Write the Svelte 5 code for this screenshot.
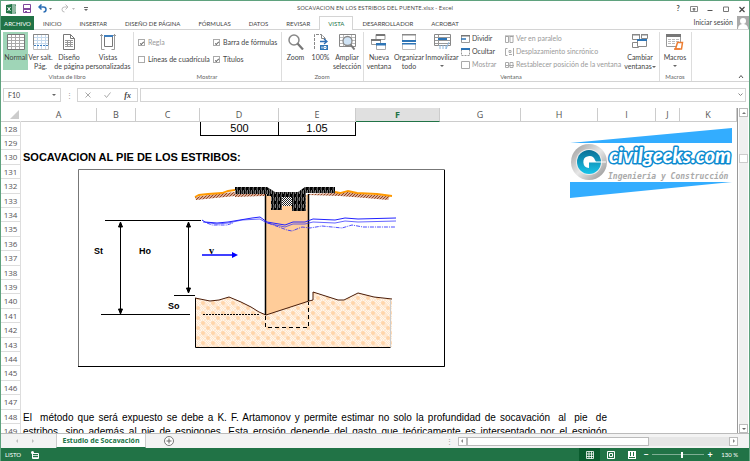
<script lang="ts">
  const tabs = [
    "INICIO",
    "INSERTAR",
    "DISEÑO DE PÁGINA",
    "FÓRMULAS",
    "DATOS",
    "REVISAR",
    "VISTA",
    "DESARROLLADOR",
    "ACROBAT",
  ];
  const columns = ["A", "B", "C", "D", "E", "F", "G", "H", "I", "J", "K"];
  const rows = Array.from({ length: 22 }, (_, i) => 128 + i);

  const paragraph: Record<number, string> = {
    148: "El  método que será expuesto se debe a K. F. Artamonov y permite estimar no solo la profundidad de socavación  al  pie  de",
    149: "estribos, sino además al pie de espigones. Esta erosión depende del gasto que teóricamente es interseptado por el espigón",
  };

  let activeTab = $state("VISTA");
  let regla = $state(true);
  let barra = $state(true);
  let lineas = $state(false);
  let titulos = $state(true);
  let zoom = $state(130);
</script>

<div class="window">
  <header class="title">
    <div class="quick">
      <svg width="10" height="10" viewBox="0 0 10 10">
        <path d="M5 1h5v8H5z" fill="#fff" stroke="#217346" />
        <path d="M6 3h3M6 5h3M6 7h3" stroke="#217346" />
        <path d="M0 1l6-1v10L0 9z" fill="#217346" />
        <path d="M1.500 3l3 4M4.500 3l-3 4" stroke="#fff" />
      </svg>
      <button aria-label="Guardar">
        <svg width="8" height="9" viewBox="0 0 8 9">
          <path d="M.5.5h7v8h-7z" fill="#fff" stroke="#80489c" />
          <path d="M1 5h6v1H1zM2 7h2v2H2z" fill="#80489c" />
          <path d="M1 4.500h6" stroke="#80489c" />
        </svg>
      </button>
      <button aria-label="Deshacer">
        <svg width="16" height="9" viewBox="0 0 16 9">
          <path d="M1 3h4.500a2.500 2.500 0 0 1 0 5M3.500.5L1 3l2.500 2.500" fill="none" stroke="#2e6fb5" stroke-width="1.500" />
          <path d="M11 4h3l-1.500 2z" fill="#777" />
        </svg>
      </button>
      <button aria-label="Rehacer">
        <svg width="16" height="9" viewBox="0 0 16 9">
          <path d="M7 3H3.500a2.500 2.500 0 0 0 0 5M4.500.5L7 3 4.500 5.500" fill="none" stroke="#bbb" />
          <path d="M11 4h3l-1.500 2z" fill="#bbb" />
        </svg>
      </button>
      <button aria-label="Personalizar barra">
        <svg width="6" height="9" viewBox="0 0 6 9">
          <path d="M0 3.500h4" stroke="#666" />
          <path d="M0 5h4L2 7z" fill="#666" />
        </svg>
      </button>
    </div>
    <h1>SOCAVACION EN LOS ESTRIBOS DEL PUENTE.xlsx - Excel</h1>
    <div class="controls">
      <button class="help">?</button>
      <button aria-label="Opciones de cinta">
        <svg width="8" height="8" viewBox="0 0 8 8">
          <path d="M.5 1.500h7v5h-7z" fill="none" stroke="#888" />
          <path d="M4 6V3M2.500 4h3" stroke="#555" />
        </svg>
      </button>
      <button aria-label="Minimizar">
        <svg width="8" height="8" viewBox="0 0 8 8"><path d="M1.500 5.500h5" stroke="#555" /></svg>
      </button>
      <button aria-label="Restaurar">
        <svg width="8" height="8" viewBox="0 0 8 8"><path d="M1.500 2h5v4.500h-5z" fill="none" stroke="#777" /></svg>
      </button>
      <button aria-label="Cerrar">
        <svg width="8" height="8" viewBox="0 0 8 8"><path d="M1.500 2l5 5M6.500 2l-5 5" stroke="#444" stroke-width="1.200" /></svg>
      </button>
    </div>
  </header>

  <nav class="tabs">
    <button class="file">ARCHIVO</button>
    {#each tabs as tab}
      <button class:active={tab === activeTab} onclick={() => (activeTab = tab)}>{tab}</button>
    {/each}
    <a class="login" href="#sesion">Iniciar sesión</a>
    <svg width="12" height="13" viewBox="0 0 12 13">
      <path d="M0 0h12v13H0z" fill="#aaa" />
      <circle cx="6" cy="5" r="3" fill="#fff" />
      <path d="M1 13c0-4 3-5 5-5s5 1 5 5z" fill="#fff" />
    </svg>
  </nav>

  <section class="ribbon">
    <div class="group">
      <div class="tools">
        <button class="tool w25 on">
          <svg width="18" height="16" viewBox="0 0 18 16">
            <path d="M.5.5h17v15H.5z" fill="#fff" stroke="#777" />
            <path d="M1 3.500h16M1 6.500h16M1 9.500h16M1 12.500h16M4.500 1v14M8.500 1v14M12.500 1v14" stroke="#aaa" />
          </svg>
          <span>Normal</span>
        </button>
        <button class="tool w25">
          <svg width="16" height="16" viewBox="0 0 16 16">
            <path d="M.5.5h15v15H.5z" fill="#fff" stroke="#bbb" />
            <path d="M1 3.500h14M1 6.500h14M1 9.500h14M4.500 1v14M8.500 1v14M12.500 1v14" stroke="#c5d9ec" />
            <path d="M.5 11V.5h15V11" fill="none" stroke="#888" />
            <path d="M1 11.500h14" stroke="#3f7fbf" stroke-dasharray="2 1" />
          </svg>
          <span>Ver salt.<br />Pág.</span>
        </button>
        <button class="tool w32">
          <svg width="14" height="16" viewBox="0 0 14 16">
            <path d="M1.500.5h7l4 4v11h-11z" fill="#fff" stroke="#777" />
            <path d="M8.500.5v4h4" fill="none" stroke="#777" />
            <path d="M3 6.500h8M3 8.500h8M3 10.500h8M3 12.500h8M5.500 6v7M8.500 6v7" stroke="#999" />
          </svg>
          <span>Diseño<br />de página</span>
        </button>
        <button class="tool w46">
          <svg width="16" height="16" viewBox="0 0 16 16">
            <path d="M0 1.500h3M13 1.500h3M1.500 0v15.500h3M14.500 0v15.500h-3" fill="none" stroke="#999" />
            <path d="M4.500 2.500h8v10h-8z" fill="#fff" stroke="#777" />
            <path d="M4 1h9v2H4z" fill="#3f7fbf" />
          </svg>
          <span>Vistas<br />personalizadas</span>
        </button>
      </div>
      <h2>Vistas de libro</h2>
    </div>

    <div class="group">
      <div class="checks">
        <label class="dim"><input type="checkbox" bind:checked={regla} disabled />Regla</label>
        <label><input type="checkbox" bind:checked={barra} />Barra de fórmulas</label>
        <label><input type="checkbox" bind:checked={lineas} />Líneas de cuadrícula</label>
        <label><input type="checkbox" bind:checked={titulos} />Títulos</label>
      </div>
      <h2>Mostrar</h2>
    </div>

    <div class="group">
      <div class="tools">
        <button class="tool w25">
          <svg width="16" height="16" viewBox="0 0 16 16">
            <circle cx="6" cy="6" r="5" fill="#fff" stroke="#888" stroke-width="1.500" />
            <path d="M9.500 9.500l5.500 6" stroke="#777" stroke-width="2.200" />
          </svg>
          <span>Zoom</span>
        </button>
        <button class="tool w25">
          <svg width="16" height="16" viewBox="0 0 16 16">
            <path d="M1.500 15V.5h7l4 4V8" fill="#fff" stroke="#888" stroke-dasharray="3 1" />
            <path d="M8.500.5v4h4" fill="none" stroke="#888" />
            <path d="M7 7.500h6M11 5l3 2.500-3 2.500" fill="none" stroke="#2e6fb5" stroke-width="1.300" />
            <path d="M7 11h8v5H7z" fill="#2e75b6" />
            <path d="M9 12.500v2M11 12.500h2v2h-2z" fill="none" stroke="#fff" />
          </svg>
          <span>100%</span>
        </button>
        <button class="tool w28">
          <svg width="17" height="16" viewBox="0 0 17 16">
            <path d="M.5.5h16v12H.5z" fill="#fff" stroke="#888" />
            <path d="M1 3.500h15M1 6.500h15M1 9.500h15M4.500 1v11M12.500 1v11" stroke="#bbb" />
            <circle cx="8.500" cy="7" r="4.500" fill="#cfe3f5" stroke="#888" stroke-width="1.300" />
            <path d="M11.500 10.500l4 5" stroke="#777" stroke-width="2" />
          </svg>
          <span>Ampliar<br />selección</span>
        </button>
      </div>
      <h2>Zoom</h2>
    </div>

    <div class="group">
      <div class="tools">
        <button class="tool w28">
          <svg width="16" height="16" viewBox="0 0 16 16">
            <path d="M5 .5h9v5H5zM.5 5.500h9v5h-9z" fill="#fff" stroke="#999" />
            <path d="M5 0h9v2H5zM0 5h10v2H0z" fill="#777" />
            <path d="M5.500 10.500h9v5h-9z" fill="#fff" stroke="#aaa" />
            <path d="M5 9h10v2.500H5z" fill="#2e75b6" />
          </svg>
          <span>Nueva<br />ventana</span>
        </button>
        <button class="tool w32">
          <svg width="14" height="16" viewBox="0 0 14 16">
            <path d="M.5.5h13v6H.5zM.5 9.500h13v6H.5z" fill="#fff" stroke="#bbb" />
            <path d="M0 0h14v1.500H0z" fill="#888" />
            <path d="M0 6h14v2H0zM0 9h14v1.500H0z" fill="#2e75b6" />
          </svg>
          <span>Organizar<br />todo</span>
        </button>
        <button class="tool w34">
          <svg width="17" height="16" viewBox="0 0 17 16">
            <path d="M.5.5h16v11H.5z" fill="#fff" stroke="#888" />
            <path d="M1 3.500h15M1 6.500h15M1 9.500h15M4.500 1v11" stroke="#999" />
            <path d="M4 4h9v2H4z" fill="#2e75b6" />
            <path d="M6 11v4M9 11v4M12 11v4M15 8l-3 7" stroke="#8ab4dc" />
          </svg>
          <span>Inmovilizar</span>
          <i class="caret"></i>
        </button>
        <div class="list narrow">
          <button>
            <svg width="9" height="8" viewBox="0 0 9 8">
              <path d="M.5.5h8v7h-8z" fill="#fff" stroke="#999" />
              <path d="M0 0h9v1.500H0z" fill="#777" />
              <path d="M0 4h5" stroke="#2e75b6" stroke-width="1.500" />
            </svg>Dividir
          </button>
          <button>
            <svg width="9" height="8" viewBox="0 0 9 8">
              <path d="M.5.5h8v7h-8z" fill="#fff" stroke="#999" stroke-dasharray="2 1" />
              <path d="M0 0h9v2H0z" fill="#2e75b6" />
            </svg>Ocultar
          </button>
          <button class="dim">
            <svg width="9" height="8" viewBox="0 0 9 8">
              <path d="M.5.5h8v7h-8z" fill="#fff" stroke="#aaa" />
            </svg>Mostrar
          </button>
        </div>
        <div class="list dim">
          <button>
            <svg width="9" height="8" viewBox="0 0 9 8">
              <path d="M.5 1.500h3v6h-3zM5 1.500h3v6H5z" fill="none" stroke="#aaa" />
              <path d="M0 1h9" stroke="#999" />
            </svg>Ver en paralelo
          </button>
          <button>
            <svg width="9" height="8" viewBox="0 0 9 8">
              <path d="M2.500.5h-2v7h2M4 2.500h2v2H4zM4 6.500h3M8.500 0v8" fill="none" stroke="#aaa" />
            </svg>Desplazamiento sincrónico
          </button>
          <button>
            <svg width="9" height="8" viewBox="0 0 9 8">
              <path d="M.5 1.500h3v5h-3zM5 1.500h3v5H5zM0 4.500h9" fill="none" stroke="#aaa" />
            </svg>Restablecer posición de la ventana
          </button>
        </div>
        <button class="tool w34">
          <svg width="16" height="16" viewBox="0 0 16 16">
            <path d="M.5.5h7v5h-7zM9.500.5h6v4h-6zM.5 8.500h6v5h-6z" fill="#fff" stroke="#888" />
            <path d="M0 0h8v1.500H0zM9 0h7v1.500H9z" fill="#888" />
            <path d="M5.500 6.500h9v6h-9z" fill="#fff" stroke="#888" />
            <path d="M5 5h10v2H5z" fill="#2e75b6" />
          </svg>
          <span>Cambiar<br />ventanas<i class="caret"></i></span>
        </button>
      </div>
      <h2>Ventana</h2>
    </div>

    <div class="group">
      <div class="tools">
        <button class="tool w28">
          <svg width="18" height="16" viewBox="0 0 18 16">
            <path d="M.5.5h14v12H.5z" fill="#fff" stroke="#999" />
            <path d="M0 0h15v3H0z" fill="#777" />
            <path d="M2 5.500h11M2 7.500h11M2 9.500h8" stroke="#bbb" stroke-dasharray="3 1" />
            <path d="M11.500 8.500h5l-1 6.500H9.500z" fill="#fff" stroke="#ed7d31" stroke-width="1.500" />
            <path d="M8 15h6" stroke="#ed7d31" stroke-width="1.500" />
          </svg>
          <span>Macros</span>
          <i class="caret"></i>
        </button>
      </div>
      <h2>Macros</h2>
    </div>
    <button class="fold" aria-label="Contraer la cinta">
      <svg width="6" height="5" viewBox="0 0 6 5"><path d="M1 4l2-2.500L5 4" fill="none" stroke="#555" /></svg>
    </button>
  </section>

  <section class="formula">
    <div class="name box">
      <input aria-label="Cuadro de nombres" value="F10" />
      <i class="caret"></i>
    </div>
    <span class="dots">⋮</span>
    <div class="fx box">
      <svg width="6" height="6" viewBox="0 0 6 6"><path d="M.5.5l5 5M5.500.5l-5 5" stroke="#aaa" /></svg>
      <svg width="7" height="6" viewBox="0 0 7 6"><path d="M.5 3l2 2.500L6.500.5" fill="none" stroke="#aaa" /></svg>
      <em>fx</em>
    </div>
    <div class="entry box">
      <input aria-label="Barra de fórmulas" value="" />
      <svg width="5" height="4" viewBox="0 0 5 4"><path d="M.5.5l2 2 2-2" fill="none" stroke="#888" /></svg>
    </div>
  </section>

  <main>
    <div class="sheet">
      <table>
        <colgroup>
          <col class="c20" /><col class="c76" /><col class="c39" /><col class="c64" />
          <col class="c79" /><col class="c77" /><col class="c84" /><col class="c81" />
          <col class="c77" /><col class="c58" /><col class="c24" /><col />
        </colgroup>
        <thead>
          <tr>
            <th class="corner"><svg width="9" height="9" viewBox="0 0 9 9"><path d="M9 0v9H0z" fill="#ccc" /></svg></th>
            {#each columns as col}
              <th class:selected={col === "F"}>{col}</th>
            {/each}
          </tr>
        </thead>
        <tbody>
          {#each rows as row}
            <tr>
              <th>{row}</th>
              {#if row === 128}
                <td colspan="3"></td>
                <td class="value first">500</td>
                <td class="value">1.05</td>
                <td colspan="6"></td>
              {:else if row === 130}
                <td colspan="11"><b>SOCAVACION AL PIE DE LOS ESTRIBOS:</b></td>
              {:else if paragraph[row]}
                <td colspan="11"><p>{paragraph[row]}</p></td>
              {:else}
                <td colspan="11"></td>
              {/if}
            </tr>
          {/each}
        </tbody>
      </table>

      <!-- section of the abutment, drawn over rows 131 to 144 -->
      <svg class="drawing" width="368" height="199" viewBox="78 168 368 199">
        <defs>
          <pattern id="soil" width="10" height="10" patternUnits="userSpaceOnUse">
            <path d="M0 0h10v10H0z" fill="#fff6ec" />
            <path d="M0 0l10 10M10 0L0 10M5 0l5 5-5 5-5-5zM2 0l8 8M0 2l8 8M8 0L0 8M10 2l-8 8" fill="none" stroke="#ffdfbf" stroke-width="0.600" />
            <circle cx="3" cy="3" r="2" fill="#ffd5aa" />
            <circle cx="8" cy="8" r="2" fill="#ffd5aa" />
          </pattern>
          <pattern id="earth" width="3" height="3" patternUnits="userSpaceOnUse">
            <path d="M0 0h3v3H0z" fill="#f3d9cc" />
            <path d="M0 3l3-3M-1 1l2-2M2 4l2-2" stroke="#923c14" stroke-width="1.100" />
          </pattern>
          <pattern id="deck" width="4" height="7" patternUnits="userSpaceOnUse">
            <path d="M0 0h4v7H0z" fill="#000" />
            <path d="M1 0l1 3-1 4M3.500 1v4" fill="none" stroke="#ccc" stroke-width="0.600" />
          </pattern>
          <pattern id="check" width="2" height="2" patternUnits="userSpaceOnUse">
            <path d="M0 0h2v2H0z" fill="#fff" />
            <path d="M0 0h1v1H0zM1 1h1v1H1z" fill="#222" />
          </pattern>
        </defs>
        <path d="M78.500 366.500v-197h366v197z" fill="#fff" stroke="#777" />
        <path d="M78 366.500h366.500V170" fill="none" stroke="#000" />

        <path d="M195 298l15 3 9-1 10-3 12 5 10 5 8 5 7 3 43-14 4-1v-8l25 8h6l14-7 16 4 18 2v48H195z" fill="url(#soil)" />
        <path d="M390.500 300v47" stroke="#ccc" />
        <path d="M195.500 298v49.500h195" fill="none" stroke="#000" />
        <path d="M266 195h43v106l-43 14z" fill="#ffcc99" />
        <path d="M195 298l15 3 9-1 10-3 12 5 10 5 8 5 7 3 43-14 4-1v-8l25 8h6l14-7 16 4 18 2" fill="none" stroke="#4a1c08" />
        <path d="M265.500 194v121M308.500 194v107" stroke="#000" stroke-width="1.500" />
        <path d="M265.500 316v11.500h43V302" fill="none" stroke="#000" stroke-dasharray="4 3" />

        <path d="M195 197l20-3 20-2v4l-20 2-19 2z" fill="url(#earth)" />
        <path d="M235 194h30v2l-30 1zM309 194l25-1 14-1 14 2 28 2-2 4-22-2-26-2-31-1z" fill="url(#earth)" />
        <path d="M195 197l4-2 9-1 14-1 6-2 7-1M335 192l5 1 8-2 9 2 20 1 15 2" fill="none" stroke="#f90" stroke-width="1.800" />
        <path d="M235 187h32l8 5h23l7-5h30v6h-29v18h-14v-14h-10v13h-11v-14h-4v-2h-32z" fill="url(#deck)" />
        <path d="M282 197h10v9h-10z" fill="url(#check)" />

        <g fill="none" stroke="#22f">
          <path d="M202 220l3 2 12 1 11-1 12-2 12-2 8-1 7 5 18 3 8-3h12l8-3 22 1 10-2 13 1 38-1" />
          <path d="M203 222l14 2 11-1 14-3 18-1 7 4 18 4 8-3h12l8-2 22 1 10-2 13 1 38-1" stroke-width="0.700" />
          <path d="M207 223l5 2h15l6-2M268 223l19 7 5 1 10-4 8 1 12-2 20 2 10-3 11 2h32" stroke-width="0.800" stroke-dasharray="4 1 1 1" />
        </g>

        <g stroke="#000" fill="#000">
          <path d="M105 220.500h96M101 314.500h89M174 295.500h21" />
          <path d="M203 314.500h56" stroke-dasharray="2 1" />
          <path d="M120.500 226v84M188.500 226v64" />
          <path d="M120.500 222l2 5h-4zM120.500 314l2-5h-4zM188.500 222l2 5h-4zM188.500 293l2-5h-4z" />
        </g>
        <path d="M202 255h31" stroke="#00f" stroke-width="1.500" />
        <path d="M232 252l6 3-6 3z" fill="#00f" />
        <text class="label" x="94" y="254">St</text>
        <text class="label" x="139" y="254">Ho</text>
        <text class="label" x="168" y="309">So</text>
        <text class="speed" x="209" y="254">v</text>
      </svg>

      <svg class="logo" width="164" height="73" viewBox="569 127 164 73">
        <defs>
          <linearGradient id="ring" x1="0" y1="0" x2="1" y2="1">
            <stop offset="0" stop-color="#999" />
            <stop offset="0.500" stop-color="#e6e6e6" />
            <stop offset="1" stop-color="#8c8c8c" />
          </linearGradient>
          <linearGradient id="ball" x1="0" y1="0" x2="0" y2="1">
            <stop offset="0" stop-color="#0a6f96" />
            <stop offset="1" stop-color="#19c4ea" />
          </linearGradient>
        </defs>
        <path d="M570 143l162-15v15zM570 182h162l-162 16z" fill="#33adff" />
        <circle cx="589" cy="162" r="18" fill="url(#ring)" />
        <circle cx="589" cy="162" r="13" fill="#eee" />
        <circle cx="589" cy="162" r="12" fill="url(#ball)" />
        <path d="M589 162h17" stroke="#fff" />
        <path d="M595 160a6 6 0 1 0-6 8v-6h7" fill="#fff" />
        <text class="brand" x="609" y="163">civilgeeks.com</text>
        <text class="motto" x="608" y="179">Ingeniería y Construcción</text>
      </svg>
    </div>
    <div class="vscroll">
      <button aria-label="Subir"><i class="up"></i></button>
      <div class="thumb"></div>
      <button aria-label="Bajar"><i class="caret"></i></button>
    </div>
  </main>

  <section class="sheets">
    <div class="arrows"><i class="left"></i><i class="right"></i></div>
    <button class="sheet-tab">Estudio de Socavación</button>
    <button class="add" aria-label="Hoja nueva">
      <svg width="10" height="10" viewBox="0 0 10 10">
        <circle cx="5" cy="5" r="4.500" fill="#fff" stroke="#777" />
        <path d="M5 2.500v5M2.500 5h5" stroke="#666" />
      </svg>
    </button>
    <span class="dots">⋮</span>
    <div class="hscroll">
      <button aria-label="Izquierda"><i class="left"></i></button>
      <div class="thumb"></div>
      <button aria-label="Derecha"><i class="right"></i></button>
    </div>
  </section>

  <footer>
    <span>LISTO</span>
    <svg class="record" width="8" height="8" viewBox="0 0 8 8">
      <path d="M1.500 2.500h6v5h-6z" fill="none" stroke="#fff" />
      <path d="M2 4.500h5M2 6.500h5" stroke="#cfe3d8" />
      <circle cx="1.500" cy="1.500" r="1.500" fill="#fff" />
    </svg>
    <button class="view on" aria-label="Normal">
      <svg width="8" height="8" viewBox="0 0 8 8"><path d="M.5.5h7v7h-7zM.5 3h7M.5 5.500h7M3 .5v7M5.500.5v7" fill="none" stroke="#fff" stroke-width="0.800" /></svg>
    </button>
    <button class="view" aria-label="Diseño de página">
      <svg width="8" height="8" viewBox="0 0 8 8"><path d="M.5.5h7v7h-7zM2.500 2.500h3v3h-3z" fill="none" stroke="#fff" /></svg>
    </button>
    <button class="view" aria-label="Vista previa de salto">
      <svg width="8" height="8" viewBox="0 0 8 8"><path d="M0 0h8v8H0z" fill="#fff" /><path d="M2.500 1v4M5.500 1v4M1 6.500h6" stroke="#217346" /></svg>
    </button>
    <button class="step" aria-label="Alejar">−</button>
    <input type="range" min="10" max="220" bind:value={zoom} aria-label="Zoom" />
    <button class="step" aria-label="Acercar">+</button>
    <span class="percent">{zoom} %</span>
  </footer>
</div>

<style>
  :global(body) {
    margin: 0;
  }

  .window {
    display: flex;
    flex-direction: column;
    height: 100vh;
    box-sizing: border-box;
    border: solid #5fa27e;
    border-width: 1px 1px 0;
    background: #fff;
    color: #444;
    font: 7px/9px Lato, "Open Sans", sans-serif;
    overflow: hidden;
  }

  button,
  input {
    margin: 0;
    padding: 0;
    border: none;
    background: none;
    font: inherit;
    color: inherit;
  }

  svg {
    display: block;
    flex: none;
  }

  h1,
  h2,
  p {
    margin: 0;
    font: inherit;
  }

  .dim {
    color: #999;
  }

  .caret,
  .up,
  .left,
  .right {
    display: inline-block;
    border: 2px solid transparent;
  }

  .caret {
    border-top-color: #666;
    border-bottom: none;
    vertical-align: middle;
  }

  .up {
    border-bottom-color: #777;
    border-top: none;
  }

  .left {
    border-right-color: #888;
    border-left: none;
  }

  .right {
    border-left-color: #888;
    border-right: none;
  }

  /* title bar and tabs */
  .title {
    display: grid;
    grid-template-columns: 1fr auto 1fr;
    align-items: center;
    height: 15px;
    flex: none;
  }

  .title h1 {
    font: 6px/9px "Open Sans", sans-serif;
  }

  .quick {
    display: flex;
    align-items: center;
    gap: 7px;
    padding-left: 5px;
  }

  .controls {
    display: flex;
    justify-content: flex-end;
    gap: 8px;
    padding-right: 3px;
  }

  .help {
    width: 8px;
    font-weight: bold;
  }

  .tabs {
    display: flex;
    height: 14px;
    flex: none;
    box-sizing: border-box;
    border-bottom: 1px solid #d4d4d4;
  }

  .tabs button {
    height: 14px;
    padding: 0 8px;
    border: solid transparent;
    border-width: 1px 1px 0;
    font-size: 6px;
    box-sizing: border-box;
    white-space: nowrap;
  }

  .tabs .file {
    width: 33px;
    padding: 0;
    background: #217346;
    color: #fff;
  }

  .tabs .active {
    background: #fff;
    border-color: #d4d4d4;
    color: #217346;
  }

  .login {
    margin: 2px 4px 0 auto;
    color: #444;
    text-decoration: none;
  }

  /* ribbon */
  .ribbon {
    display: flex;
    height: 52px;
    flex: none;
    border-bottom: 1px solid #d4d4d4;
    padding: 2px 0 0 2px;
    box-sizing: border-box;
  }

  .group {
    display: flex;
    flex-direction: column;
    justify-content: space-between;
    padding-right: 2px;
    margin-right: 1px;
    border-right: 1px solid #ddd;
  }

  .group h2 {
    text-align: center;
    font-size: 6px;
    line-height: 8px;
    color: #666;
  }

  .tools {
    display: flex;
  }

  .tool {
    display: flex;
    flex-direction: column;
    align-items: center;
    gap: 3px;
    height: 38px;
    padding-top: 2px;
    box-sizing: border-box;
    white-space: nowrap;
  }

  .tool.on {
    background: #9fd5b7;
  }

  .w25 {
    width: 25px;
  }

  .w28 {
    width: 28px;
  }

  .w32 {
    width: 32px;
  }

  .w34 {
    width: 34px;
  }

  .w46 {
    width: 46px;
  }

  .checks {
    display: grid;
    grid-template-columns: 75px 66px;
    row-gap: 8px;
    padding: 6px 0 0 3px;
  }

  .checks label {
    display: flex;
    align-items: center;
    gap: 3px;
    white-space: nowrap;
  }

  .checks input {
    appearance: none;
    display: grid;
    place-items: center;
    width: 7px;
    height: 7px;
    border: 1px solid #aaa;
    box-sizing: border-box;
    background: #fff;
  }

  .checks input:checked::before {
    content: "";
    width: 3px;
    height: 1px;
    border: solid #666;
    border-width: 0 0 1px 1px;
    transform: rotate(-45deg);
  }

  .list {
    display: flex;
    flex-direction: column;
    gap: 4px;
    width: 118px;
    padding: 2px 0 0 2px;
  }

  .list.narrow {
    width: 42px;
  }

  .list button {
    display: flex;
    align-items: center;
    gap: 2px;
    height: 9px;
    white-space: nowrap;
  }

  .fold {
    margin: auto 5px 2px auto;
  }

  /* formula bar */
  .formula {
    display: flex;
    gap: 2px;
    height: 26px;
    flex: none;
    padding: 6px 3px 6px 2px;
    box-sizing: border-box;
  }

  .box {
    display: flex;
    align-items: center;
    justify-content: space-between;
    border: 1px solid #d4d4d4;
    box-sizing: border-box;
    padding: 0 4px;
  }

  .box input {
    flex: 1;
    min-width: 0;
  }

  .name {
    width: 58px;
  }

  .dots {
    width: 12px;
    text-align: center;
    line-height: 14px;
    color: #999;
  }

  .fx {
    width: 61px;
    padding: 0 6px 0 7px;
  }

  .fx em {
    font: italic bold 8px "Liberation Serif", serif;
  }

  .entry {
    flex: 1;
    padding-right: 2px;
  }

  /* grid */
  main {
    display: flex;
    flex: 1;
    min-height: 0;
  }

  .sheet {
    position: relative;
    flex: 1;
    overflow: hidden;
    border-right: 1px solid #999;
  }

  table {
    width: 100%;
    table-layout: fixed;
    border-spacing: 0;
    color: #000;
    font: 11px/13px "Liberation Sans", Arial, sans-serif;
  }

  th,
  td {
    padding: 0;
    height: 14px;
    box-sizing: border-box;
  }

  tr:nth-child(5n + 3) > *,
  tr:nth-child(5n) > * {
    height: 15px;
  }

  thead th {
    border: solid #ccc;
    border-width: 0 1px 1px 0;
    font: 9px/12px "Open Sans", sans-serif;
    color: #555;
  }

  thead .corner {
    border-right-color: transparent;
  }

  .corner svg {
    margin-left: 9px;
  }

  thead .selected {
    background: #e0e0e0;
    border-bottom: 1px solid #217346;
    color: #217346;
    font-weight: bold;
  }

  tbody th {
    border: solid #ddd;
    border-width: 0 1px 1px 0;
    font: 8px/12px "Open Sans", sans-serif;
    color: #555;
  }

  td {
    padding-left: 2px;
    white-space: nowrap;
  }

  .value {
    padding: 0;
    text-align: center;
    border: solid #000;
    border-width: 0 1px 1px 0;
  }

  .value.first {
    border-left-width: 1px;
  }

  td p {
    width: 584px;
    font-size: 10px;
    white-space: pre-wrap;
    text-align: justify;
    text-align-last: justify;
  }

  .c20 {
    width: 20px;
  }

  .c24 {
    width: 24px;
  }

  .c39 {
    width: 39px;
  }

  .c58 {
    width: 58px;
  }

  .c64 {
    width: 64px;
  }

  .c76 {
    width: 76px;
  }

  .c77 {
    width: 77px;
  }

  .c79 {
    width: 79px;
  }

  .c81 {
    width: 81px;
  }

  .c84 {
    width: 84px;
  }

  /* floating objects of the sheet */
  .drawing {
    position: absolute;
    left: 77px;
    top: 60px;
  }

  .logo {
    position: absolute;
    left: 568px;
    top: 19px;
  }

  .label {
    font: bold 9px "Liberation Sans", Arial, sans-serif;
  }

  .speed {
    font: bold 10px "Liberation Serif", serif;
  }

  .brand {
    font: italic 900 20px Lato, sans-serif;
    fill: #fff;
    stroke: #0d8bd0;
    stroke-width: 3px;
    stroke-linejoin: round;
    paint-order: stroke;
  }

  .motto {
    font: italic bold 8px "DejaVu Sans Mono", monospace;
    fill: #aaa;
  }

  .vscroll {
    display: flex;
    flex-direction: column;
    width: 9px;
    margin: 0 1px;
    background: #f0f0f0;
  }

  .vscroll button,
  .hscroll button {
    display: grid;
    place-items: center;
    width: 9px;
    height: 9px;
    border: 1px solid #bbb;
    box-sizing: border-box;
    background: #fff;
  }

  .vscroll .thumb {
    height: 9px;
    margin: 37px 0 auto;
    border: 1px solid #ccc;
    box-sizing: border-box;
    background: #fff;
  }

  /* sheet tabs and status bar */
  .sheets {
    display: flex;
    align-items: center;
    height: 15px;
    flex: none;
    border-top: 1px solid #bbb;
    box-sizing: border-box;
    background: #f3f3f3;
    padding-right: 11px;
  }

  .arrows {
    display: flex;
    gap: 14px;
    width: 40px;
    padding-left: 15px;
    opacity: 0.5;
  }

  .sheet-tab {
    height: 14px;
    width: 90px;
    background: #fff;
    border: solid #ccc;
    border-width: 0 1px;
    border-bottom: 1px solid #217346;
    color: #217346;
    font: bold 7px/9px "Open Sans", sans-serif;
    white-space: nowrap;
  }

  .add {
    margin: 0 auto 0 18px;
  }

  .hscroll {
    display: flex;
    width: 38%;
    margin-left: 2px;
    background: #e6e6e6;
  }

  .hscroll .thumb {
    width: 65%;
    margin-right: auto;
    border: 1px solid #bbb;
    box-sizing: border-box;
    background: #fff;
  }

  footer {
    display: flex;
    align-items: center;
    height: 13px;
    flex: none;
    margin: 0 -1px;
    padding: 0 12px 0 5px;
    background: #217346;
    color: #fff;
    font-size: 6px;
  }

  .record {
    margin: 0 auto 0 10px;
  }

  .view {
    display: grid;
    place-items: center;
    width: 21px;
    height: 13px;
  }

  .view.on {
    background: #0a5c2e;
  }

  .step {
    width: 8px;
    font-size: 9px;
    font-weight: bold;
  }

  footer input {
    appearance: none;
    width: 52px;
    height: 9px;
    margin: 0 2px;
    background: linear-gradient(#7fae94, #7fae94) center / 100% 1px no-repeat;
  }

  footer input::-webkit-slider-thumb {
    appearance: none;
    width: 2px;
    height: 6px;
    background: #fff;
  }

  .percent {
    margin-left: 7px;
  }
</style>
